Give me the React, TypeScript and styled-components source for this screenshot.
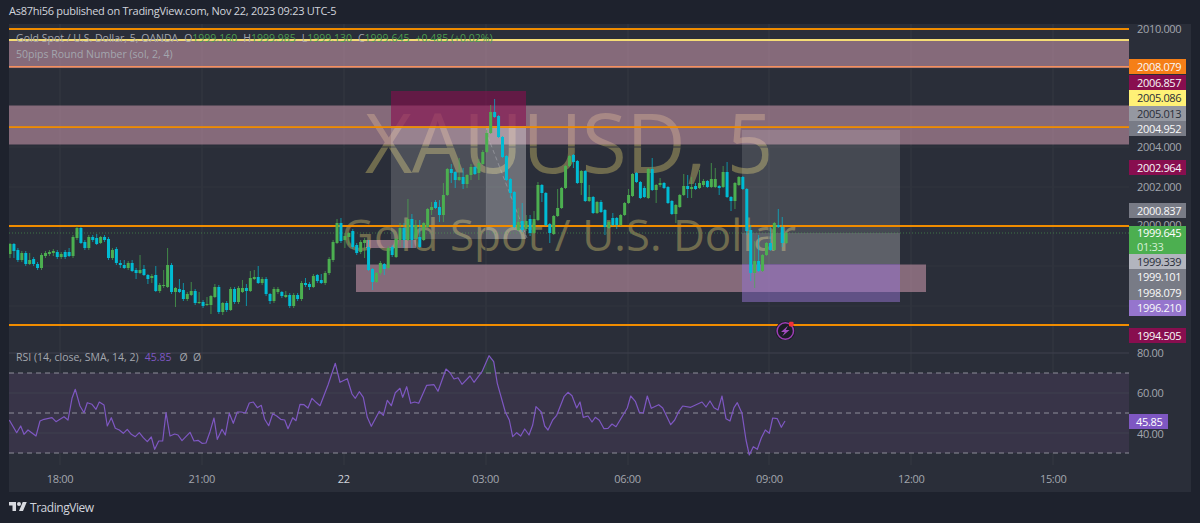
import React from "react";
import styled, { createGlobalStyle } from "styled-components";

const GlobalStyle = createGlobalStyle`
  html, body {
    margin: 0;
    background: #1e222d;
  }
  body {
    font-family: "Open Sans", "Liberation Sans", sans-serif;
  }
`;

const Page = styled.div`
  width: 1200px;
  height: 523px;
  display: flex;
  flex-direction: column;
  overflow: hidden;
  background: #1e222d;
`;

const Header = styled.div`
  height: 24px;
  padding: 0 0 4px 9px;
  box-sizing: border-box;
  display: flex;
  align-items: center;
  color: #d1d4dc;
  font-size: 11px;
  letter-spacing: -0.27px;
  white-space: nowrap;
`;

const Frame = styled.div`
  height: 468px;
  margin: 0 9px;
  display: grid;
  grid-template-columns: 1120px 62px;
  grid-template-rows: 441px 27px;
  background: #2a2e39;
`;

const Panes = styled.div`
  display: flex;
  flex-direction: column;
`;

const MainPane = styled.div`
  position: relative;
  height: 316px;
  overflow: hidden;
`;

const RsiPane = styled.div`
  position: relative;
  height: 125px;
`;

const Watermark = styled.div`
  position: absolute;
  left: 0;
  right: 0;
  top: 67px;
  display: flex;
  flex-direction: column;
  align-items: center;
  color: #6f6b4e;
  white-space: nowrap;
`;

const WatermarkTitle = styled.div`
  font-size: 82px;
  font-weight: 500;
  letter-spacing: -0.5px;
  line-height: 100px;
`;

const WatermarkSub = styled.div`
  font-size: 44px;
  line-height: 50px;
  margin-top: 18px;
`;

const Plot = styled.svg`
  position: absolute;
  left: 0;
  top: 0;
  display: block;
`;

const Legend = styled.div`
  position: absolute;
  left: 7px;
  top: 6px;
  color: #a3a6ae;
  font-size: 10.5px;
  line-height: 16px;
  white-space: nowrap;
`;

const LegendValue = styled.span`
  color: #4a9d4e;
  margin-right: 6px;
`;

const LegendName = styled.span`
  margin-right: 6px;
`;

const RsiLegend = styled(Legend)`
  top: 9px;
`;

const RsiValue = styled.span`
  color: #7e57c2;
  margin: 0 8px 0 6px;
`;

const PriceAxis = styled.div`
  position: relative;
  font-size: 11px;
  letter-spacing: -0.33px;
`;

const Tick = styled.div<{ $y: number }>`
  position: absolute;
  left: 8px;
  top: ${(p) => p.$y - 24 - 5}px;
  height: 10px;
  line-height: 10px;
  color: #a3a6ae;
`;

const Tag = styled.div<{ $y: number; $bg: string; $dark?: boolean }>`
  position: absolute;
  left: 0;
  width: 57px;
  top: ${(p) => p.$y - 24 - 7.7}px;
  height: 15.4px;
  line-height: 15.4px;
  box-sizing: border-box;
  padding-left: 8px;
  background: ${(p) => p.$bg};
  color: ${(p) => (p.$dark ? "#2a2e39" : "#f8f9fa")};
`;

const LiveTag = styled.div`
  position: absolute;
  left: 0;
  top: 202px;
  width: 57px;
  height: 28px;
  box-sizing: border-box;
  padding: 0 0 0 8px;
  background: #4caf50;
  color: #fff;
  line-height: 13.5px;
`;

const Countdown = styled.div`
  color: #d5efd6;
`;

const RsiTag = styled.div`
  position: absolute;
  left: 0;
  top: 390px;
  width: 39px;
  height: 15.4px;
  line-height: 15.4px;
  box-sizing: border-box;
  padding-left: 7px;
  background: #7e57c2;
  color: #fff;
`;

const TimeAxis = styled.div`
  display: flex;
  margin-left: -20px;
  align-items: center;
  padding-bottom: 1px;
`;

const TimeLabel = styled.div<{ $strong?: boolean }>`
  width: 141.9px;
  flex: none;
  text-align: center;
  color: ${(p) => (p.$strong ? "#d1d4dc" : "#a3a6ae")};
  font-size: 11px;
  letter-spacing: -0.3px;
`;

const Footer = styled.div`
  flex: 1;
  display: flex;
  align-items: center;
  gap: 3px;
  padding: 0 0 1px 9px;
  color: #d1d4dc;
  font-size: 12px;
  letter-spacing: -0.45px;
`;

// [body top, body bottom, up?, wick top, wick bottom], page pixels
type Candle = [number, number, number, number?, number?];

const candles: Candle[] = [
  [244, 254, 1, 243, 258], [244, 251, 0, 243, 258], [250, 260, 0], [253, 260, 1], [253, 264, 0], [260, 264, 1, 253, 265],
  [259, 264, 0], [264, 268, 0], [255, 268, 1], [253, 256, 1], [252, 254, 1, 250, 256], [251, 253, 1, 249, 256],
  [252, 257, 0], [254, 257, 1], [252, 257, 0], [252, 256, 0, 248, 257], [237, 256, 1], [228, 238, 1], [228, 243, 0, 227, 244],
  [242, 248, 0], [237, 248, 1], [237, 240, 0, 235, 242], [238, 244, 0, 234, 245], [237, 243, 1, 236, 244], [237, 240, 0],
  [239, 258, 0], [250, 258, 1], [249, 263, 0], [263, 265, 0, 260, 268], [265, 268, 0, 260, 269], [263, 268, 1],
  [263, 271, 0, 260, 272], [270, 273, 0, 268, 279], [270, 273, 1, 255, 274], [269, 275, 0, 265, 276], [275, 279, 0, 274, 284],
  [276, 278, 1, 274, 283], [275, 291, 0, 266, 292], [285, 291, 1], [285, 286, 1, 270, 288], [265, 287, 1, 248, 288],
  [265, 292, 0], [288, 292, 1, 287, 307], [289, 292, 0, 279, 293], [290, 299, 0, 283, 301], [294, 299, 1], [291, 295, 1, 282, 296],
  [291, 303, 0], [302, 303, 1, 292, 304], [302, 306, 0], [304, 305, 1, 297, 306], [296, 305, 1, 295, 314], [287, 297, 1, 284, 298],
  [287, 312, 0], [303, 312, 1, 302, 315], [303, 310, 0], [289, 310, 1, 287, 311], [289, 302, 0], [288, 302, 1], [288, 292, 1, 280, 293],
  [288, 291, 0, 284, 306], [278, 291, 1, 271, 292], [277, 279, 1, 270, 280], [277, 283, 0, 266, 284], [279, 283, 1], [279, 294, 0],
  [294, 301, 0, 293, 304], [289, 301, 1], [289, 292, 1], [292, 296, 0, 291, 298], [295, 297, 1, 291, 298], [295, 306, 0], [295, 306, 1],
  [295, 299, 0], [283, 299, 1], [283, 285, 0, 278, 287], [284, 287, 0, 282, 290], [276, 287, 1, 274, 288], [275, 281, 0, 274, 283],
  [280, 283, 0, 274, 284], [273, 283, 1], [259, 273, 1], [242, 260, 1], [223, 243, 1, 219, 244], [223, 241, 0, 218, 243], [236, 240, 1, 233, 248],
  [233, 237, 1, 232, 245], [231, 247, 0], [245, 253, 0], [242, 252, 1], [240, 243, 1, 238, 258], [247, 270, 0, 240, 271],
  [269, 282, 0, 268, 290], [273, 282, 1, 272, 283], [263, 273, 1], [264, 269, 0, 263, 275], [248, 268, 1], [247, 255, 0, 245, 257],
  [239, 257, 1, 238, 258], [228, 240, 1, 223, 247], [228, 240, 0, 223, 248], [219, 240, 1, 199, 241], [219, 240, 0, 214, 248],
  [225, 238, 1, 220, 240], [237, 247, 0, 220, 248], [223, 240, 1, 222, 241], [209, 227, 1, 208, 228], [207, 210, 1, 202, 215],
  [202, 208, 0, 200, 209], [207, 215, 0, 200, 222], [195, 215, 1, 183, 222], [169, 195, 1, 168, 196], [169, 173, 0, 164, 183],
  [172, 180, 0, 171, 188], [177, 180, 1, 158, 181], [177, 184, 0, 168, 189], [175, 184, 1, 174, 188], [167, 175, 1, 164, 180],
  [167, 174, 0, 166, 175], [163, 173, 1, 159, 180], [152, 164, 1, 150, 165], [133, 152, 1, 130, 153], [112, 133, 1, 105, 134],
  [112, 117, 0, 99, 118], [116, 137, 0, 115, 138], [137, 157, 0, 136, 158], [156, 180, 0, 155, 181], [179, 193, 0, 178, 198],
  [192, 227, 0, 191, 228], [222, 230, 1, 208, 231], [221, 230, 0, 203, 232], [221, 229, 1, 215, 231], [219, 233, 0, 215, 236],
  [219, 233, 1, 211, 234], [185, 220, 1, 182, 221], [185, 193, 0, 184, 202], [193, 225, 0, 192, 226], [224, 233, 0, 223, 243],
  [216, 234, 1, 215, 235], [208, 216, 1, 189, 217], [188, 208, 1, 187, 209], [166, 188, 1, 165, 189], [156, 166, 1, 155, 167],
  [155, 162, 0, 154, 168], [161, 183, 0, 160, 184], [171, 183, 1, 170, 195], [171, 201, 0, 170, 202], [197, 201, 1, 185, 202],
  [197, 213, 0, 196, 214], [202, 213, 1, 201, 214], [202, 212, 0, 200, 213], [210, 227, 0, 209, 235], [222, 228, 1, 221, 229],
  [218, 225, 0, 213, 226], [218, 225, 0, 217, 229], [215, 225, 1, 214, 226], [203, 215, 1, 202, 216], [195, 203, 1, 189, 204],
  [174, 196, 1, 173, 197], [173, 182, 0, 172, 183], [182, 198, 0, 181, 199], [188, 197, 0, 186, 198], [169, 198, 1, 168, 199],
  [169, 190, 0, 158, 191], [185, 190, 1, 184, 203], [183, 185, 1, 178, 187], [183, 188, 0, 182, 189], [187, 203, 0, 186, 204],
  [201, 214, 0, 200, 215], [205, 214, 1, 204, 223], [195, 207, 1, 194, 208], [186, 195, 1, 174, 196], [186, 189, 0, 175, 198],
  [187, 189, 1, 177, 198], [186, 189, 0, 183, 190], [183, 188, 1, 170, 189], [181, 185, 1, 179, 187], [181, 187, 0, 180, 188],
  [179, 187, 1, 163, 188], [179, 187, 1, 168, 188], [186, 188, 0, 185, 195], [172, 187, 1, 166, 188], [172, 197, 0, 162, 198],
  [197, 201, 0, 196, 211], [183, 201, 1, 182, 209], [177, 185, 1, 176, 186], [177, 189, 0, 176, 190], [189, 231, 0, 188, 235],
  [230, 273, 0, 225, 281], [261, 273, 1, 241, 288], [261, 271, 0, 235, 272], [255, 271, 1, 254, 272], [243, 255, 1, 242, 256],
  [243, 250, 0, 227, 251], [223, 250, 1, 222, 251], [225, 227, 0, 209, 228], [227, 243, 0, 217, 247], [233, 243, 1, 232, 244],
];

const rsiLeft: [number, number][] = [
  [28, 240], [50, 278], [62, 258], [72, 283], [84, 270], [108, 288], [120, 243], [132, 238], [156, 233], [168, 245], [192, 230],
  [204, 240], [216, 175], [226, 148], [240, 198], [252, 218], [262, 188], [276, 193], [288, 208], [298, 186], [312, 195], [322, 258],
  [334, 233], [346, 265], [358, 270], [370, 280], [382, 268], [394, 283], [406, 290], [418, 278], [430, 293], [442, 305], [454, 291],
  [464, 328], [476, 303], [488, 303], [498, 218], [510, 288], [524, 282], [534, 285], [546, 302], [570, 277], [582, 303], [594, 301],
  [606, 310], [618, 309], [630, 275], [642, 234], [652, 298], [666, 268], [676, 285], [688, 220], [700, 250], [712, 216], [724, 216],
  [736, 219], [748, 189], [760, 186], [772, 203], [784, 196], [794, 238], [806, 257], [818, 221], [830, 228], [842, 238], [854, 240],
  [864, 266], [878, 233], [888, 242], [900, 193], [912, 194], [924, 204], [936, 175], [948, 187], [960, 197], [984, 135], [1006, 70],
  [1020, 127], [1042, 116], [1056, 162], [1066, 175], [1078, 155], [1090, 172], [1102, 232], [1114, 259], [1138, 214], [1150, 226],
  [1162, 181], [1174, 197], [1186, 158], [1200, 145],
];

const rsiRight: [number, number][] = [
  [8, 172], [20, 140], [32, 190], [44, 186], [56, 190], [80, 136], [102, 134], [114, 154], [138, 87], [150, 98], [162, 117], [174, 113],
  [186, 133], [210, 108], [222, 127], [246, 95], [267, 47], [281, 65], [292, 130], [316, 216], [328, 240], [338, 290], [350, 278],
  [362, 288], [374, 267], [387, 285], [398, 255], [408, 200], [424, 216], [434, 258], [444, 270], [458, 240], [470, 226], [492, 170],
  [504, 157], [516, 167], [530, 204], [540, 186], [550, 232], [564, 228], [576, 246], [586, 232], [598, 241], [612, 266], [624, 265],
  [636, 252], [648, 260], [682, 204], [692, 168], [706, 184], [718, 217], [730, 219], [742, 168], [754, 205], [776, 194], [788, 204],
  [812, 254], [824, 240], [836, 215], [848, 198], [872, 202], [906, 186], [918, 201], [930, 183], [942, 203], [954, 210], [966, 168],
  [978, 236], [990, 243], [1002, 203], [1012, 188], [1026, 220], [1038, 300], [1048, 345], [1060, 320], [1072, 328], [1084, 294],
  [1096, 270], [1108, 280], [1118, 234], [1132, 236], [1144, 262], [1155, 243],
];

const rsiPoints = [
  ...rsiLeft.map(([x, y]) => `${(x / 3).toFixed(1)},${(340 + y / 3).toFixed(1)}`),
  ...rsiRight.map(([x, y]) => `${(400 + x / 3).toFixed(1)},${(340 + y / 3).toFixed(1)}`),
].join(" ");

const gridX = [60, 202, 344, 486, 628, 769, 911, 1053];
const gridY = [68, 108, 147, 187, 226, 266, 306];
const rsiGridY = [353, 393, 433];

const BAND = "rgba(224,166,187,0.5)";
const UP = "#4caf50";
const DOWN = "#00bcd4";

const tags: { y: number; text: string; bg: string; dark?: boolean }[] = [
  { y: 66.7, text: "2008.079", bg: "#f57f17" },
  { y: 82.3, text: "2006.857", bg: "#880e4f" },
  { y: 98, text: "2005.086", bg: "#fff176", dark: true },
  { y: 113.3, text: "2005.013", bg: "#9598a1", dark: true },
  { y: 128.7, text: "2004.952", bg: "#787b86" },
  { y: 167.7, text: "2002.964", bg: "#880e4f" },
  { y: 210.7, text: "2000.837", bg: "#787b86" },
  { y: 261.7, text: "1999.339", bg: "#b2b5be", dark: true },
  { y: 277, text: "1999.101", bg: "#787b86" },
  { y: 292.7, text: "1998.079", bg: "#787b86" },
  { y: 308, text: "1996.210", bg: "#9575cd" },
  { y: 335.3, text: "1994.505", bg: "#880e4f" },
];

const ticks: { y: number; text: string }[] = [
  { y: 29, text: "2010.000" },
  { y: 146.7, text: "2004.000" },
  { y: 186.7, text: "2002.000" },
  { y: 225, text: "2000.000" },
  { y: 352.5, text: "80.00" },
  { y: 392.5, text: "60.00" },
  { y: 433.5, text: "40.00" },
];

const times = ["18:00", "21:00", "22", "03:00", "06:00", "09:00", "12:00", "15:00"];

const Drawing = () => (
  <>
    {gridX.map((x) => (
      <line key={x} x1={x} x2={x} y1={24} y2={340} stroke="#343843" />
    ))}
    {gridY.map((y) => (
      <line key={y} x1={9} x2={1129} y1={y} y2={y} stroke="#31353f" />
    ))}

    {/* zones and position boxes */}
    <rect x={9} y={40} width={1120} height={28} fill={BAND} />
    <rect x={9} y={105.5} width={1120} height={39} fill={BAND} />
    <rect x={356} y={264.5} width={570} height={27.5} fill={BAND} />
    <rect x={366} y={240} width={50} height={8} fill={BAND} />

    <rect x={391} y={91} width={135} height={35} fill="rgba(136,14,79,0.6)" />
    <rect x={391} y={126} width={135} height={113} fill="rgba(255,255,255,0.16)" />
    <rect x={486} y={126} width={40} height={113} fill="rgba(255,255,255,0.18)" />
    <line x1={488} y1={137} x2={527} y2={238} stroke="rgba(210,210,215,0.35)" strokeDasharray="4 3" />

    <rect x={742} y={130} width={158} height={134} fill="rgba(255,255,255,0.13)" />
    <rect x={742} y={233} width={158} height={31} fill="rgba(255,255,255,0.13)" />
    <rect x={742} y={264} width={158} height={38} fill="rgba(150,115,210,0.5)" />

    {/* horizontal levels */}
    <rect x={9} y={28} width={1120} height={2} fill="#f08c00" />
    <rect x={9} y={39} width={1120} height={2} fill="#f5dc75" />
    <rect x={9} y={66} width={1120} height={1.5} fill="#f58f5c" />
    <rect x={9} y={126.2} width={1120} height={1.8} fill="#f08c00" />
    <rect x={9} y={225} width={1120} height={2} fill="#f08c00" />
    <rect x={9} y={324} width={1120} height={2} fill="#f08c00" />
    <line x1={9} x2={1129} y1={233} y2={233} stroke="#4caf50" strokeOpacity={0.55} strokeDasharray="1 2" />

    {candles.map(([top, bottom, up, wickTop, wickBottom], i) => {
      const x = 10 + i * 3.94;
      const color = up ? UP : DOWN;
      return (
        <g key={i}>
          <line x1={x} x2={x} y1={wickTop ?? top - 2} y2={wickBottom ?? bottom + 2} stroke={color} strokeOpacity={0.7} />
          <rect x={x - 1.5} y={top} width={3} height={Math.max(bottom - top, 1)} fill={color} />
        </g>
      );
    })}

    {/* alert badge */}
    <circle cx={785.3} cy={331} r={9.8} fill="#1b1d26" />
    <circle cx={785.3} cy={331} r={8.2} fill="none" stroke="#9c3fb5" strokeWidth={1.5} />
    <path d="M788 325.8 L781 331.9 L784.7 331.9 L782.3 336.2 L789.6 330 L785.8 330 Z" fill="#a24cc0" />
    <rect x={789} y={321.8} width={4.6} height={4.6} rx={1.2} fill="#f0303c" />
  </>
);

const RsiDrawing = () => (
  <>
    {gridX.map((x) => (
      <line key={x} x1={x} x2={x} y1={340} y2={465} stroke="#343843" />
    ))}
    <rect x={9} y={373} width={1120} height={80} fill="#383448" />
    {rsiGridY.map((y) => (
      <line key={y} x1={9} x2={1129} y1={y} y2={y} stroke="#3f404e" />
    ))}
    {[373, 413, 453].map((y) => (
      <line key={y} x1={9} x2={1129} y1={y} y2={y} stroke="#8d8d99" strokeDasharray="5 4" />
    ))}
    <path d="M482 373 L489 356 L494 361 L496 373 Z" fill="rgba(76,175,80,0.15)" />
    <polyline points={rsiPoints} fill="none" stroke="#7e57c2" strokeWidth={1.2} strokeLinejoin="round" />
  </>
);

export default function App() {
  return (
    <Page>
      <GlobalStyle />
      <Header>As87hi56 published on TradingView.com, Nov 22, 2023 09:23 UTC-5</Header>
      <Frame>
        <Panes>
          <MainPane>
            <Watermark>
              <WatermarkTitle>XAUUSD, 5</WatermarkTitle>
              <WatermarkSub>Gold Spot / U.S. Dollar</WatermarkSub>
            </Watermark>
            <Plot width={1120} height={316} viewBox="9 24 1120 316">
              <Drawing />
            </Plot>
            <Legend>
              <div>
                <LegendName>Gold Spot / U.S. Dollar, 5, OANDA</LegendName>
                O<LegendValue>1999.160</LegendValue>
                H<LegendValue>1999.985</LegendValue>
                L<LegendValue>1999.130</LegendValue>
                C<LegendValue>1999.645</LegendValue>
                <LegendValue>+0.485 (+0.02%)</LegendValue>
              </div>
              <div>50pips Round Number (sol, 2, 4)</div>
            </Legend>
          </MainPane>
          <RsiPane>
            <Plot width={1120} height={125} viewBox="9 340 1120 125">
              <RsiDrawing />
            </Plot>
            <RsiLegend>
              RSI (14, close, SMA, 14, 2)
              <RsiValue>45.85</RsiValue>Ø&nbsp;&nbsp;Ø
            </RsiLegend>
          </RsiPane>
        </Panes>
        <PriceAxis>
          {ticks.map((t) => (
            <Tick key={t.text} $y={t.y}>
              {t.text}
            </Tick>
          ))}
          {tags.map((t) => (
            <Tag key={t.text} $y={t.y} $bg={t.bg} $dark={t.dark}>
              {t.text}
            </Tag>
          ))}
          <LiveTag>
            1999.645
            <Countdown>01:33</Countdown>
          </LiveTag>
          <RsiTag>45.85</RsiTag>
        </PriceAxis>
        <TimeAxis>
          {times.map((t) => (
            <TimeLabel key={t} $strong={t === "22"}>
              {t}
            </TimeLabel>
          ))}
        </TimeAxis>
        <div />
      </Frame>
      <Footer>
        <svg width="18" height="14" viewBox="0 0 36 28" fill="#d8dae0">
          <path d="M14 22H7V11H0V4h14v18zM28 22h-8l7.5-18h8L28 22z" />
          <circle cx="20" cy="8" r="4" />
        </svg>
        TradingView
      </Footer>
    </Page>
  );
}
